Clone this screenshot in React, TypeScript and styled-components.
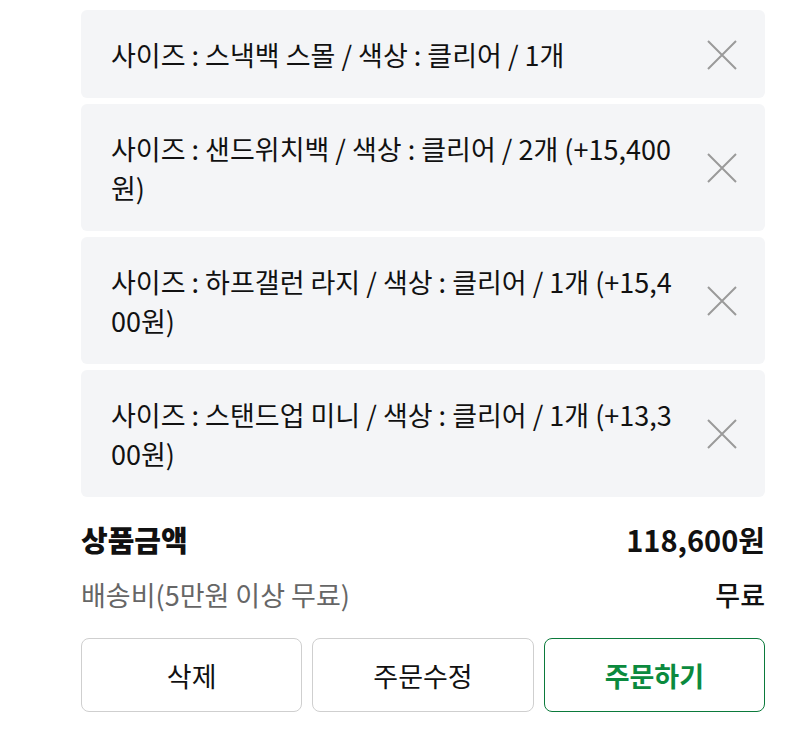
import React from "react";
import styled, { createGlobalStyle } from "styled-components";

const Global = createGlobalStyle`
  html, body { margin: 0; padding: 0; background: #ffffff; }
  body { font-family: "Noto Sans CJK KR", "Noto Sans", sans-serif; }
`;

const Page = styled.div`
  width: 800px;
  height: 746px;
  box-sizing: border-box;
  padding: 10px 35px 0 81px;
  display: flex;
  flex-direction: column;
  overflow: hidden;
`;

const List = styled.div`
  display: flex;
  flex-direction: column;
  gap: 6px;
`;

const Card = styled.div`
  background: #f4f5f7;
  border-radius: 6px;
  display: flex;
  align-items: center;
  padding: 25px 27px 24px 30px;
  min-height: 39px;
`;

const OptionText = styled.div`
  flex: 1;
  max-width: 568px;
  font-size: 27px;
  line-height: 39px;
  color: #111;
  word-break: break-all;
`;

const CloseBtn = styled.button`
  margin-left: auto;
  width: 32px;
  height: 32px;
  padding: 0;
  border: none;
  background: transparent;
  display: flex;
  align-items: center;
  justify-content: center;
`;

const SumRow = styled.div<{ $top: number }>`
  display: flex;
  justify-content: space-between;
  align-items: center;
  height: 40px;
  margin-top: ${(p) => p.$top}px;
`;

const SumLabel = styled.span<{ $bold?: boolean }>`
  font-size: ${(p) => (p.$bold ? 29 : 27)}px;
  font-weight: ${(p) => (p.$bold ? 800 : 400)};
  color: ${(p) => (p.$bold ? "#111" : "#666")};
`;

const SumValue = styled.span<{ $bold?: boolean }>`
  font-size: ${(p) => (p.$bold ? 29 : 27)}px;
  font-weight: ${(p) => (p.$bold ? 700 : 500)};
  color: #111;
`;

const Buttons = styled.div`
  display: grid;
  grid-template-columns: repeat(3, 1fr);
  gap: 10px;
  margin-top: 24px;
`;

const Btn = styled.button<{ $primary?: boolean }>`
  height: 74px;
  border-radius: 8px;
  background: #fff;
  border: 1.5px solid ${(p) => (p.$primary ? "#0b7a3b" : "#cfcfcf")};
  color: ${(p) => (p.$primary ? "#0b8a3e" : "#111")};
  font-family: "Noto Sans CJK KR", "Noto Sans", sans-serif;
  font-size: 27px;
  font-weight: ${(p) => (p.$primary ? 700 : 400)};
`;

const XIcon = () => (
  <svg width="32" height="32" viewBox="0 0 32 32">
    <path d="M2 2 L30 30 M30 2 L2 30" stroke="#9a9a9a" strokeWidth="2" fill="none" />
  </svg>
);

const options = [
  "사이즈 : 스낵백 스몰 / 색상 : 클리어 / 1개",
  "사이즈 : 샌드위치백 / 색상 : 클리어 / 2개 (+15,400원)",
  "사이즈 : 하프갤런 라지 / 색상 : 클리어 / 1개 (+15,400원)",
  "사이즈 : 스탠드업 미니 / 색상 : 클리어 / 1개 (+13,300원)",
];

export default function App() {
  return (
    <>
      <Global />
      <Page>
        <List>
          {options.map((o) => (
            <Card key={o}>
              <OptionText>{o}</OptionText>
              <CloseBtn aria-label="삭제">
                <XIcon />
              </CloseBtn>
            </Card>
          ))}
        </List>
        <SumRow $top={22}>
          <SumLabel $bold>상품금액</SumLabel>
          <SumValue $bold>118,600원</SumValue>
        </SumRow>
        <SumRow $top={15}>
          <SumLabel>배송비(5만원 이상 무료)</SumLabel>
          <SumValue>무료</SumValue>
        </SumRow>
        <Buttons>
          <Btn>삭제</Btn>
          <Btn>주문수정</Btn>
          <Btn $primary>주문하기</Btn>
        </Buttons>
      </Page>
    </>
  );
}
